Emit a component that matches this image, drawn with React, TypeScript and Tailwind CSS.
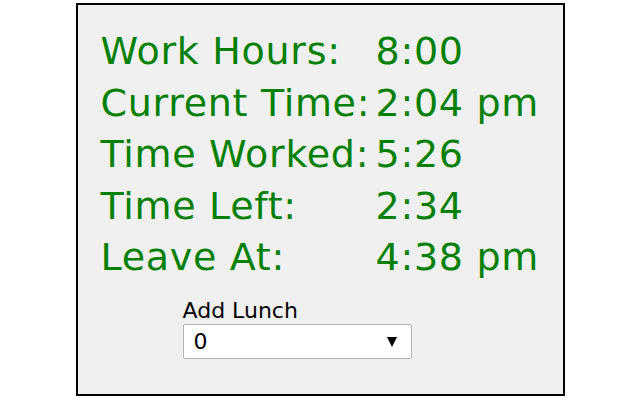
import { useState } from "react";

const rows = [
  { label: "Work Hours:", value: "8:00" },
  { label: "Current Time:", value: "2:04 pm" },
  { label: "Time Worked:", value: "5:26" },
  { label: "Time Left:", value: "2:34" },
  { label: "Leave At:", value: "4:38 pm" },
];

export default function App() {
  const [lunch, setLunch] = useState("0");

  return (
    <div className="w-[640px] h-[400px] bg-white pt-[3px]">
      <div className="mx-auto w-[489px] h-[393px] border-2 border-black bg-[#f0f0f0] pt-[21px] pl-[23px] font-['DejaVu_Sans',Verdana,sans-serif]">
        <div className="grid grid-cols-[275px_1fr] text-[38px] leading-[51.5px] tracking-[0.7px] text-[#008000]">
          {rows.map((row) => (
            <div key={row.label} className="contents">
              <div className="whitespace-nowrap">{row.label}</div>
              <div className="whitespace-nowrap">{row.value}</div>
            </div>
          ))}
        </div>

        <div className="ml-[82px] mt-[14px] flex flex-col items-start">
          <label className="text-[22px] leading-[26px] text-black">Add Lunch</label>
          <div className="relative">
            <select
              value={lunch}
              onChange={(e) => setLunch(e.target.value)}
              className="appearance-none w-[229px] h-[35px] bg-white border border-[#b4b4b4] rounded-[2px] pl-[10px] text-[22px] text-black font-['DejaVu_Sans',sans-serif] outline-none"
            >
              <option value="0">0</option>
              <option value="15">15</option>
              <option value="30">30</option>
              <option value="45">45</option>
              <option value="60">60</option>
            </select>
            <svg
              className="absolute right-[15px] top-[13px] pointer-events-none"
              width="10"
              height="10"
              viewBox="0 0 10 10"
            >
              <path d="M0 0 H10 L5 10 Z" fill="#000" />
            </svg>
          </div>
        </div>
      </div>
    </div>
  );
}
